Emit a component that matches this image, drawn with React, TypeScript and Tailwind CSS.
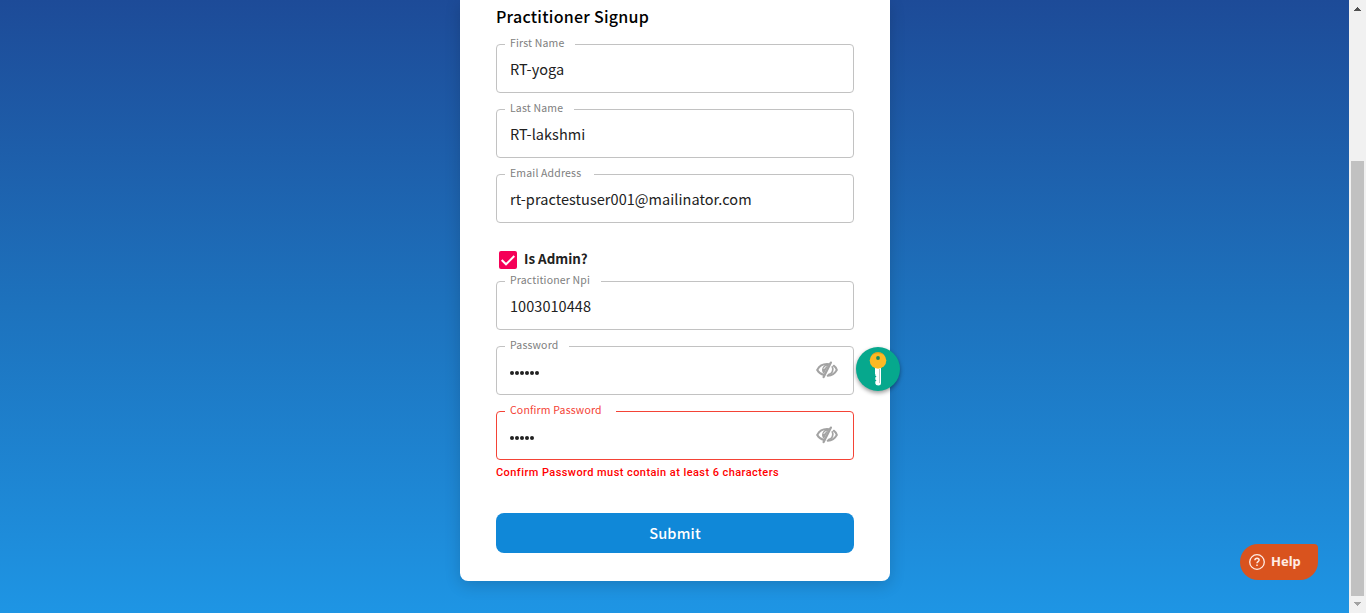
import { useState } from "react";

type FieldProps = {
  label: string;
  value: string;
  notch: string;
  error?: boolean;
  secret?: boolean;
};

function EyeOffIcon() {
  return (
    <svg className="-mt-[2px]" width="22" height="18" viewBox="0 0 22 18" fill="none" stroke="#a3a3a3" strokeLinecap="round">
      <path d="M8.200 14.100C5 13.300 2.500 11.300 1.200 8.900C3.200 5.200 6.900 3.100 11 3.100L13.200 3.200" strokeWidth="2" />
      <path d="M17.700 4.700C19.200 5.700 20.200 7.100 20.800 8.900C19 12.200 15.800 14.400 11.700 14.700" strokeWidth="2" />
      <path d="M14.900 1.600L7.600 16" strokeWidth="2.300" />
      <path d="M13 3.300A5.700 5.700 0 0 0 7.900 13Z" fill="#a3a3a3" stroke="none" />
      <path d="M16.300 5.800A5.500 5.500 0 0 1 12.600 13.700" strokeWidth="1.700" />
      <path d="M7.900 7.600Q8.300 5.900 10 5.500" stroke="#fff" strokeWidth="0.900" />
    </svg>
  );
}

function Field({ label, value, notch, error, secret }: FieldProps) {
  const [text, setText] = useState(value);
  return (
    <div
      className={`relative flex h-[49px] w-full items-center rounded-[4px] border pr-[15px] pl-[13px] ${
        error ? "border-[#f44336]" : "border-[#c2c2c2]"
      }`}
    >
      <label
        className={`absolute -top-[10px] left-[8px] h-4 bg-white pl-[5px] text-[10.5px] leading-[15px] tracking-[0.17px] whitespace-nowrap ${notch} ${
          error ? "text-[#f44336]" : "text-[#808080]"
        }`}
      >
        {label}
      </label>
      {secret ? (
        <span className="flex flex-1 items-center gap-[1px] pt-1">
          {Array.from(value).map((_, i) => (
            <span key={i} className="size-1 rounded-full bg-[#212121]" />
          ))}
        </span>
      ) : (
        <input
          className="w-full bg-transparent pt-px text-[14.5px] leading-6 tracking-[0.05px] text-[#212121] outline-none"
          value={text}
          aria-label={label}
          onChange={(e) => setText(e.target.value)}
        />
      )}
      {secret && <EyeOffIcon />}
    </div>
  );
}

function KeyBadge() {
  return (
    <div className="absolute top-[347px] left-[396px] size-11 rounded-full bg-[#06a88d] shadow-[0_2px_4px_rgba(0,0,0,0.4)]">
      <svg width="44" height="44" viewBox="0 0 44 44">
        <path d="M19 21H25V36Q25 38.500 22.300 38.500Q19.500 38.500 19.300 36.500V34.500L20.500 33.500L19.300 32.500V30.500L20.500 29.500L19.300 28.500V27H19Z" fill="#fff" />
        <path d="M23.500 22V36" stroke="#b9c9c6" strokeWidth="1" />
        <circle cx="22" cy="13.500" r="8.300" fill="#fdb924" />
        <path d="M15.500 8.300A8.300 8.300 0 0 1 28.500 8.300Q22 4 15.500 8.300Z" fill="#e59b17" />
        <circle cx="22" cy="11" r="1.900" fill="#168c62" />
      </svg>
    </div>
  );
}

function Scrollbar() {
  return (
    <div className="flex h-full w-[17px] shrink-0 flex-col items-center bg-[#f1f1f1]">
      <svg className="mt-[7px] shrink-0" width="7" height="4" viewBox="0 0 7 4" shapeRendering="crispEdges">
        <path d="M3 0H4V1H5V2H6V3H7V4H0V3H1V2H2V1H3Z" fill="#505050" />
      </svg>
      <div className="mt-[150px] h-[435px] w-[13px] shrink-0 bg-[#c1c1c1]" />
      <svg className="mt-[6px] shrink-0" width="7" height="4" viewBox="0 0 7 4" shapeRendering="crispEdges">
        <path d="M0 0H7V1H6V2H5V3H4V4H3V3H2V2H1V1H0Z" fill="#a3a3a3" />
      </svg>
    </div>
  );
}

export default function App() {
  return (
    <div className="flex h-[613px] w-full overflow-hidden font-['Noto_Sans_CJK_SC',sans-serif]">
      <main className="relative flex min-w-0 flex-1 justify-center bg-linear-to-b from-[#1d4b98] via-[#1d72bd] to-[#1e95e4]">
        <section className="relative ml-px flex h-[581px] w-[430px] flex-col rounded-b-[8px] bg-white px-9 shadow-[0_4px_16px_rgba(0,0,0,0.16)]">
          <h1 className="mt-[4px] mb-[16px] h-6 text-[16px] leading-6 font-medium tracking-[0.25px] whitespace-nowrap text-black">
            Practitioner Signup
          </h1>
          <div className="flex flex-col gap-4">
            <Field label="First Name" value="RT-yoga" notch="w-[70px]" />
            <Field label="Last Name" value="RT-lakshmi" notch="w-[69px]" />
            <Field label="Email Address" value="rt-practestuser001@mailinator.com" notch="w-[89px]" />
          </div>
          <div className="mt-[28px] flex h-[18px] items-center gap-[7px] pl-[3px]">
            <svg width="18" height="18" viewBox="0 0 18 18">
              <rect width="18" height="18" rx="2" fill="#f50057" />
              <path d="M2.700 9L7 13.300L15.300 5" fill="none" stroke="#fff" strokeWidth="2" />
            </svg>
            <span className="pb-[3px] text-[13.4px] font-bold text-[#212121]">Is Admin?</span>
          </div>
          <div className="mt-[12px] flex flex-col gap-4">
            <Field label="Practitioner Npi" value="1003010448" notch="w-[96px]" />
            <Field label="Password" value="123456" notch="w-[64px]" secret />
            <Field label="Confirm Password" value="12345" notch="w-[111px]" secret error />
          </div>
          <p className="mt-[5px] h-4 font-[Roboto,sans-serif] text-[11px] leading-4 font-medium tracking-[0.43px] whitespace-nowrap text-[#f00]">
            Confirm Password must contain at least 6 characters
          </p>
          <button className="mt-8 h-10 w-full rounded-[8px] bg-[#1088d8] text-[14.5px] font-medium tracking-[0.2px] text-white">
            Submit
          </button>
          <KeyBadge />
        </section>
        <button className="absolute top-[544px] right-[31px] flex h-9 w-[78px] items-center gap-[6px] rounded-[18px] rounded-tr-[4px] bg-[#d9531e] pl-[9px] font-['Noto_Sans',sans-serif] text-[13px] font-bold text-[#ffece4]">
          <svg width="16" height="16" viewBox="0 0 16 16" fill="none" stroke="#ffece4" strokeWidth="1.300">
            <circle cx="8" cy="8" r="7.300" />
            <path d="M5.900 6.300Q6 4.300 8.100 4.300Q10.100 4.400 10.100 6.100C10.100 7.600 8 7.600 8 9.300" strokeWidth="1.500" />
            <path d="M8 10.600V12" strokeWidth="1.500" />
          </svg>
          Help
        </button>
      </main>
      <Scrollbar />
    </div>
  );
}
